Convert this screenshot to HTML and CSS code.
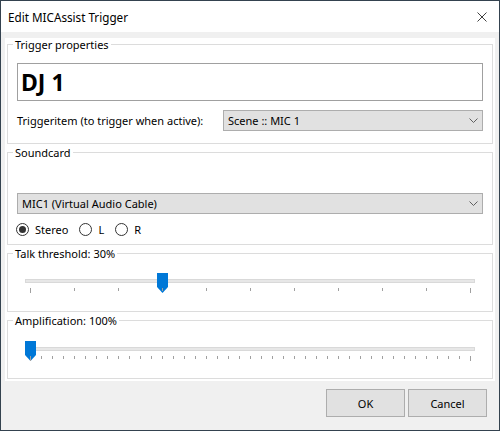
FILE: index.html
```html
<!DOCTYPE html>
<html>
<head>
<meta charset="utf-8">
<link rel="stylesheet" href="styles.css">
</head>
<body>
<div class="window">
  <div class="titlebar">
    <span class="title">Edit MICAssist Trigger</span>
    <svg class="close" width="10" height="10" viewBox="0 0 10 10"><path d="M0.5 0.5 L9.5 9.5 M9.5 0.5 L0.5 9.5" stroke="#404040" stroke-width="1" fill="none"/></svg>
  </div>
  <div class="content">
    <div class="panel">
      <fieldset class="group">
        <legend>Trigger properties</legend>
        <div class="group-body body-trigger">
          <div class="name-box">DJ 1</div>
          <div class="trigger-row">
            <span class="label">Triggeritem (to trigger when active):</span>
            <div class="combo combo-trigger">
              <span>Scene :: MIC 1</span>
              <svg class="chev" width="9" height="5" viewBox="0 0 9 5"><path d="M0.5 0.5 L4.5 4.5 L8.5 0.5" stroke="#606060" fill="none"/></svg>
            </div>
          </div>
        </div>
      </fieldset>
    </div>
    <div class="panel">
      <fieldset class="group">
        <legend>Soundcard</legend>
        <div class="group-body body-sound">
          <div class="combo combo-sound">
            <span>MIC1 (Virtual Audio Cable)</span>
            <svg class="chev" width="9" height="5" viewBox="0 0 9 5"><path d="M0.5 0.5 L4.5 4.5 L8.5 0.5" stroke="#606060" fill="none"/></svg>
          </div>
          <div class="radios">
            <label class="radio"><span class="dot checked"></span><span>Stereo</span></label>
            <label class="radio"><span class="dot"></span><span>L</span></label>
            <label class="radio"><span class="dot"></span><span>R</span></label>
          </div>
        </div>
      </fieldset>
    </div>
    <div class="panel">
      <fieldset class="group">
        <legend>Talk threshold: 30%</legend>
        <div class="group-body body-talk">
          <div class="slider">
            <div class="track"></div>
            <svg class="thumb" style="left:140px" width="11" height="20" viewBox="0 0 11 20"><path d="M0 0 H11 V14 L5.5 20 L0 14 Z" fill="#0078d7"/></svg>
            <div class="ticks ticks-wide"></div>
          </div>
        </div>
      </fieldset>
    </div>
    <div class="panel">
      <fieldset class="group">
        <legend>Amplification: 100%</legend>
        <div class="group-body body-amp">
          <div class="slider">
            <div class="track"></div>
            <svg class="thumb" style="left:8px" width="11" height="20" viewBox="0 0 11 20"><path d="M0 0 H11 V14 L5.5 20 L0 14 Z" fill="#0078d7"/></svg>
            <div class="ticks ticks-dense"></div>
          </div>
        </div>
      </fieldset>
    </div>
    <div class="buttons">
      <button class="btn">OK</button>
      <button class="btn">Cancel</button>
    </div>
  </div>
</div>
</body>
</html>
```
FILE: styles.css
```css
* { box-sizing: border-box; }
html, body { margin: 0; padding: 0; }
body {
  font-family: "Noto Sans", "Open Sans", sans-serif;
  font-size: 11px;
  color: #000;
  background: #f0f0f0;
}
.window {
  width: 500px;
  height: 431px;
  border: 1px solid #34424f;
  background: #f0f0f0;
  display: flex;
  flex-direction: column;
}
.titlebar {
  height: 31px;
  background: #fff;
  display: flex;
  align-items: center;
  justify-content: space-between;
  padding: 0 12px 0 7px;
}
.title { font-size: 11.7px; line-height: 16px; }
.close { display: block; }
.content {
  flex: 1;
  padding: 6px 4px 0 4px;
  display: flex;
  flex-direction: column;
}
.panel {
  background: #fff;
  padding: 0 0 2px 0;
}
.group {
  margin: 0 2px;
  padding: 0;
  min-width: 0;
  border: 1px solid #dcdcdc;
}
.group legend {
  margin-left: 5px;
  padding: 0 2px;
  line-height: 13px;
  font-size: 11px;
}
.group-body { padding: 0 9px; }
.body-trigger { padding-top: 12px; padding-bottom: 12px; }
.name-box {
  height: 38px;
  border: 1px solid #a0a0a0;
  font-size: 23px;
  font-weight: bold;
  line-height: 36px;
  padding-left: 3px;
}
.trigger-row {
  margin-top: 9px;
  display: flex;
  align-items: center;
  justify-content: space-between;
}
.combo {
  height: 21px;
  background: #e1e1e1;
  border: 1px solid #adadad;
  display: flex;
  align-items: center;
  justify-content: space-between;
  padding: 0 4px 0 4px;
}
.combo-trigger { width: 260px; }
.chev { display: block; }
.body-sound { padding-top: 34px; padding-bottom: 8px; }
.radios {
  margin-top: 9px;
  display: flex;
  align-items: center;
  gap: 11px;
  margin-left: -1px;
  height: 13px;
}
.radio { display: flex; align-items: center; gap: 6px; }
.dot {
  width: 13px;
  height: 13px;
  border: 1px solid #333;
  border-radius: 50%;
  display: flex;
  align-items: center;
  justify-content: center;
  background: #fff;
}
.dot.checked::after {
  content: "";
  width: 7px;
  height: 7px;
  border-radius: 50%;
  background: #333;
}
.body-talk { padding-top: 13px; padding-bottom: 12px; }
.body-amp { padding-top: 14px; padding-bottom: 11px; }
.slider {
  position: relative;
  height: 26px;
}
.track {
  position: relative;
  top: 6px;
  margin-left: 8px;
  width: 450px;
  height: 4px;
  background: #e7e7e7;
  border: 1px solid #d9d9d9;
}
.thumb {
  position: absolute;
  top: 0;
  display: block;
}
.ticks {
  position: relative;
  top: 11px;
  margin-left: 13px;
  width: 441px;
  height: 5px;
}
.ticks-wide {
  background:
    linear-gradient(#a0a0a0, #a0a0a0) left top / 1px 5px no-repeat,
    linear-gradient(#a0a0a0, #a0a0a0) right top / 1px 5px no-repeat,
    repeating-linear-gradient(to right, #a0a0a0 0 1px, transparent 1px 44px) left top / 100% 3px no-repeat;
}
.ticks-dense {
  background:
    linear-gradient(#a0a0a0, #a0a0a0) left top / 1px 5px no-repeat,
    linear-gradient(#a0a0a0, #a0a0a0) right top / 1px 5px no-repeat,
    repeating-linear-gradient(to right, #a0a0a0 0 1px, transparent 1px 11px) left top / 100% 3px no-repeat;
}
.buttons {
  display: flex;
  justify-content: flex-end;
  gap: 3px;
  padding: 8px 8px 0 0;
}
.btn {
  width: 79px;
  height: 28px;
  background: #e1e1e1;
  border: 1px solid #adadad;
  font-family: inherit;
  font-size: 11px;
  color: #000;
  padding: 0;
}
```
